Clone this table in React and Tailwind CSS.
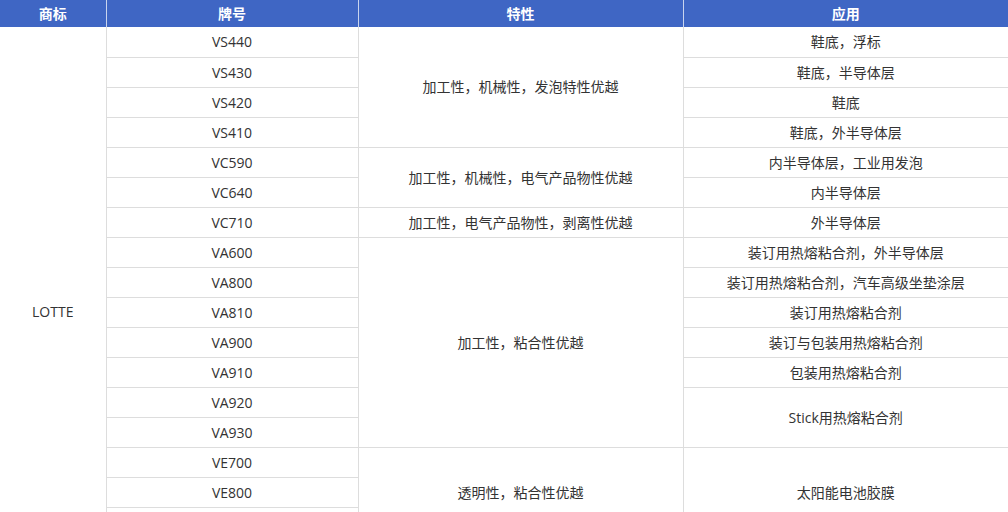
import React from "react";

const groups = [
  {
    feature: "加工性，机械性，发泡特性优越",
    rows: [
      ["VS440", "鞋底，浮标"],
      ["VS430", "鞋底，半导体层"],
      ["VS420", "鞋底"],
      ["VS410", "鞋底，外半导体层"],
    ],
  },
  {
    feature: "加工性，机械性，电气产品物性优越",
    rows: [
      ["VC590", "内半导体层，工业用发泡"],
      ["VC640", "内半导体层"],
    ],
  },
  {
    feature: "加工性，电气产品物性，剥离性优越",
    rows: [["VC710", "外半导体层"]],
  },
  {
    feature: "加工性，粘合性优越",
    rows: [
      ["VA600", "装订用热熔粘合剂，外半导体层"],
      ["VA800", "装订用热熔粘合剂，汽车高级坐垫涂层"],
      ["VA810", "装订用热熔粘合剂"],
      ["VA900", "装订与包装用热熔粘合剂"],
      ["VA910", "包装用热熔粘合剂"],
      ["VA920", "Stick用热熔粘合剂", 2],
      ["VA930", null],
    ],
  },
  {
    feature: "透明性，粘合性优越",
    rows: [
      ["VE700", "太阳能电池胶膜", 3],
      ["VE800", null],
      ["VE900", null],
    ],
  },
  {
    feature: "耐热性，粘合性优越",
    rows: [
      ["VE810", "太阳能电池胶膜", 2],
      ["VE910", null],
    ],
  },
];

const totalRows = groups.reduce((n, g) => n + g.rows.length, 0);
const cell = "border border-[#dddddd] text-center align-middle p-0";

export default function App() {
  return (
    <div
      className="w-[1008px] h-[512px] overflow-hidden bg-white text-[14px] text-[#333333]"
      style={{ fontFamily: '"Open Sans", "Noto Sans CJK SC", sans-serif' }}
    >
      <table className="w-[1008px] table-fixed border-collapse">
        <colgroup>
          <col className="w-[106px]" />
          <col className="w-[252px]" />
          <col className="w-[325px]" />
          <col className="w-[325px]" />
        </colgroup>
        <thead>
          <tr className="h-[27px] bg-[#3f66c4] text-white font-bold">
            <th className="border-r border-[#c9d4ee] border-l-0 p-0">商标</th>
            <th className="border-r border-[#c9d4ee] p-0">牌号</th>
            <th className="border-r border-[#c9d4ee] p-0">特性</th>
            <th className="p-0">应用</th>
          </tr>
        </thead>
        <tbody>
          {groups.map((g, gi) =>
            g.rows.map((r, ri) => (
              <tr key={r[0]} className="h-[30px]">
                {gi === 0 && ri === 0 && (
                  <td rowSpan={totalRows} className={`${cell} border-l-0 border-t-0`}>
                    LOTTE
                  </td>
                )}
                <td className={`${cell} ${gi === 0 && ri === 0 ? "border-t-0" : ""}`}>{r[0]}</td>
                {ri === 0 && (
                  <td rowSpan={g.rows.length} className={`${cell} ${gi === 0 ? "border-t-0" : ""}`}>
                    {g.feature}
                  </td>
                )}
                {r[1] !== null && (
                  <td
                    rowSpan={r[2] || 1}
                    className={`${cell} border-r-0 ${gi === 0 && ri === 0 ? "border-t-0" : ""}`}
                  >
                    {r[1]}
                  </td>
                )}
              </tr>
            ))
          )}
        </tbody>
      </table>
    </div>
  );
}
